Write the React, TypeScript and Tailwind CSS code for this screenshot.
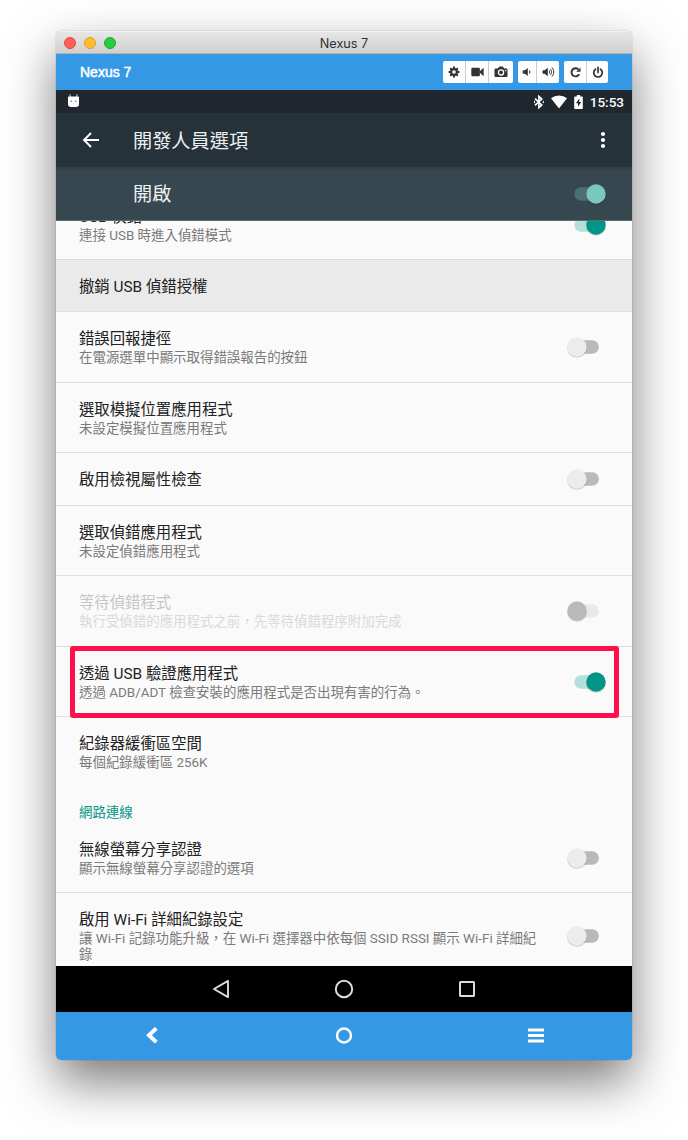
import React from "react";

type SwitchState = "on" | "off" | "disabled" | "master";

const switchColors: Record<SwitchState, { track: string; thumb: string; on: boolean }> = {
  on: { track: "#b5dfdb", thumb: "#009587", on: true },
  off: { track: "#b9b9b9", thumb: "#ececec", on: false },
  disabled: { track: "#e9e9ea", thumb: "#b9b9b9", on: false },
  master: { track: "#4b6f74", thumb: "#79c8c0", on: true },
};

function Switch({ state }: { state: SwitchState }) {
  const c = switchColors[state];
  const cx = c.on ? 30 : 11;
  return (
    <svg width="42" height="26" viewBox="0 0 42 26" className="shrink-0">
      <rect x="8.3" y="6.3" width="24.6" height="13.4" rx="6.7" fill={c.track} />
      <circle cx={cx} cy="13.9" r="9.9" fill="#000" opacity="0.16" />
      <circle cx={cx} cy="13" r="9.7" fill={c.thumb} />
    </svg>
  );
}

interface RowProps {
  title: string;
  summary?: string;
  state?: SwitchState;
  className: string;
  disabled?: boolean;
}

function Row({ title, summary, state, className, disabled }: RowProps) {
  return (
    <div className={`flex shrink-0 items-center justify-between pl-[23px] pr-6 ${className}`}>
      <div className={summary ? "w-[466px]" : "w-[466px] pt-[2px]"}>
        <div className={`text-[15.36px] leading-[22px] ${disabled ? "text-[#c6c6c6]" : "text-[#222222]"}`}>{title}</div>
        {summary && (
          <div className={`text-[13.44px] leading-4 ${disabled ? "text-[#d9d9d9]" : "text-[#7a7a7a]"}`}>{summary}</div>
        )}
      </div>
      {state && <Switch state={state} />}
    </div>
  );
}

function ToolButton({ className, children }: { className: string; children: React.ReactNode }) {
  return <div className={`box-content flex h-[22px] items-center justify-center bg-[#fefefe] text-[#333333] ${className}`}>{children}</div>;
}

const group = "flex overflow-hidden rounded-[2px] border-[#d4dde4] divide-x divide-[#cccccc]";

function Toolbar() {
  return (
    <div className="flex gap-[5px]">
      <div className={group}>
        <ToolButton className="w-[22px]">
          <svg width="12" height="12" viewBox="0 0 12 12" fill="none" stroke="currentColor">
            <circle cx="6" cy="6" r="2.9" strokeWidth="2.2" />
            <path d="M6 .6v1.8M6 9.6v1.8M.6 6h1.8M9.6 6h1.8M2.2 2.2l1.2 1.2M8.6 8.6l1.2 1.2M2.2 9.8l1.2-1.2M8.6 3.4l1.2-1.2" strokeWidth="2" />
          </svg>
        </ToolButton>
        <ToolButton className="w-[22px]">
          <svg width="13" height="10" viewBox="0 0 13 10" fill="currentColor">
            <rect x="0.3" y="0.7" width="8.6" height="8.6" rx="1.2" />
            <path d="M8.8 4.2 12.6 .7v8.6L8.8 5.800z" />
          </svg>
        </ToolButton>
        <ToolButton className="w-[24px]">
          <svg width="14" height="12" viewBox="0 0 14 12">
            <path d="M1.6 2.6h2.1L4.9.9q.3-.4.7-.4h2.8q.4 0 .7.4l1.2 1.7h2.1q1.1 0 1.1 1.1v6.2q0 1.1-1.1 1.1H1.6Q.5 11 .5 9.900V3.700q0-1.100 1.100-1.100z" fill="currentColor" />
            <circle cx="7" cy="6.400" r="2.600" fill="none" stroke="#fff" strokeWidth="1.300" />
            <rect x="11" y="4" width="1.300" height="1.200" fill="#fff" />
          </svg>
        </ToolButton>
      </div>
      <div className={group}>
        <ToolButton className="w-[18px]">
          <svg width="10" height="10" viewBox="0 0 10 10">
            <path d="M.8 3.200h2L5.800.9v8.200L2.800 6.800h-2z" fill="currentColor" />
            <path d="M7.300 3.500q1.300 1.500 0 3" fill="none" stroke="currentColor" strokeWidth="1.100" />
          </svg>
        </ToolButton>
        <ToolButton className="w-[22px]">
          <svg width="13" height="12" viewBox="0 0 13 12">
            <path d="M.6 4.200h2L5.800 1.800v8.400L2.600 7.800h-2z" fill="currentColor" />
            <path d="M7.200 4.400q1.100 1.600 0 3.200M8.600 2.900q2.300 3.100 0 6.200M10 1.500q3.600 4.500 0 9" fill="none" stroke="currentColor" strokeWidth="0.900" />
          </svg>
        </ToolButton>
      </div>
      <div className={group}>
        <ToolButton className="w-[22px]">
          <svg width="13" height="13" viewBox="0 0 13 13">
            <path d="M9.300 3.200A4.100 4.100 0 1 0 10.200 8.300" fill="none" stroke="currentColor" strokeWidth="1.900" />
            <path d="M11.500 1.400v4.300H7.200z" fill="currentColor" />
          </svg>
        </ToolButton>
        <ToolButton className="w-[21px]">
          <svg width="12" height="13" viewBox="0 0 12 13" fill="none" stroke="currentColor" strokeWidth="1.700" strokeLinecap="round">
            <path d="M3.500 3.200a4.300 4.300 0 1 0 5 0M6 1.400v5" />
          </svg>
        </ToolButton>
      </div>
    </div>
  );
}

export default function App() {
  return (
    <div className="h-[1140px] w-[688px] overflow-hidden bg-white pl-14 pt-[31px] font-['Roboto','Noto_Sans_CJK_TC',sans-serif]">
      <div className="flex h-[1029px] w-[576px] flex-col overflow-hidden rounded-[5px] shadow-[0_0_1px_rgba(0,0,0,0.6),0_22px_50px_rgba(0,0,0,0.52)]">
        <div className="flex h-[23px] shrink-0 items-center border-b border-t border-b-[#b4b4b4] border-t-[#f2f2f2] bg-linear-to-b from-[#e7e7e7] to-[#d0d0d0] px-2">
          <div className="flex w-20 gap-2">
            <span className="size-3 rounded-full border border-[#e14942] bg-[#ff5f57]" />
            <span className="size-3 rounded-full border border-[#dfa023] bg-[#ffbd2e]" />
            <span className="size-3 rounded-full border border-[#1dac2b] bg-[#28ca41]" />
          </div>
          <div className="flex-1 pt-[2px] text-center font-['Inter',sans-serif] text-[12.7px] leading-5 text-[#303030]">Nexus 7</div>
          <div className="w-20" />
        </div>

        <div className="flex h-9 shrink-0 items-center justify-between bg-[#3498e5] pl-6 pr-6">
          <div className="font-['Liberation_Sans',sans-serif] text-[14px] text-white [-webkit-text-stroke:0.5px_white]">Nexus 7</div>
          <Toolbar />
        </div>

        <div className="flex h-[23px] shrink-0 items-center justify-between bg-[#21272e] pl-[11px] pr-2 text-white">
          <svg width="13" height="14" viewBox="0 0 13 14" className="-mt-[2px]">
            <path d="M2.800 .3 3.500 3M10.200 .3 9.500 3" stroke="#d5d7d8" />
            <path d="M1.500 2.500h10q.5 0 .5.500v7q0 3-3 3H4q-3 0-3-3V3q0-.5.500-.5z" fill="#fff" />
            <circle cx="4.200" cy="7.300" r=".8" fill="#6b7075" />
            <circle cx="8.800" cy="7.300" r=".8" fill="#6b7075" />
          </svg>
          <div className="flex items-center">
            <svg width="10" height="14" viewBox="0 0 10 14" className="mr-[7px]" fill="none" stroke="#fff" strokeWidth="1.600">
              <path d="m1 3.600 6.800 6.300-2.900 2.700V1.400l2.900 2.700L1 10.400" />
              <path d="M9.300 5.800v2.400M.6 5.800v2.400" strokeWidth="1" />
            </svg>
            <svg width="16" height="14" viewBox="0 0 16 14" className="mr-[7px]">
              <path d="M0 3.200Q3.400.4 8 .4t8 2.800L8 13.400z" fill="#fff" />
            </svg>
            <svg width="9" height="14" viewBox="0 0 9 14" className="mr-[7px]">
              <path d="M2.800 0h3.400v1.400H8q.8 0 .8.800v11q0 .8-.8.800H1q-.8 0-.8-.8v-11q0-.8.8-.8h1.800z" fill="#fff" />
              <path d="M5.300 3.500 2 8.200h2v3.600l3.200-4.900H5.300z" fill="#21272e" />
            </svg>
            <span className="text-[13.5px] font-medium leading-5">15:53</span>
          </div>
        </div>

        <div className="flex h-[54px] shrink-0 items-center bg-[#263239] pl-[26px] pr-[26px] text-[#eef0f1]">
          <svg width="18" height="16" viewBox="0 0 18 16" fill="none" stroke="#fff" strokeWidth="1.900">
            <path d="M17 8H2.500M9 1 2 8l7 7" />
          </svg>
          <div className="ml-[33px] flex-1 pt-[3px] text-[19.2px] leading-7">開發人員選項</div>
          <svg width="6" height="18" viewBox="0 0 6 18" fill="#fff">
            <circle cx="3" cy="3" r="2.100" />
            <circle cx="3" cy="9" r="2.100" />
            <circle cx="3" cy="15" r="2.100" />
          </svg>
        </div>

        <div className="flex h-[54px] shrink-0 items-center justify-between border-b border-[#5f6c72] bg-[#37474f] bg-linear-to-b from-[#303e46] from-0% to-[#37474f] to-[4px] pl-[77px] pr-6 text-[#eef0f1]">
          <div className="pt-[3px] text-[19.2px] leading-7">開啟</div>
          <Switch state="master" />
        </div>

        <div className="relative flex h-[745px] shrink-0 flex-col overflow-hidden bg-[#fafafa]">
          <Row title="USB 偵錯" summary="連接 USB 時進入偵錯模式" state="on" className="-mt-[31px] h-[70px] border-b border-[#dadada] pt-[1px]" />
          <Row title="撤銷 USB 偵錯授權" className="h-[52px] border-b border-[#e2e2e2] bg-[#eaeaea]" />
          <Row title="錯誤回報捷徑" summary="在電源選單中顯示取得錯誤報告的按鈕" state="off" className="h-[71px] border-b border-[#dadada]" />
          <Row title="選取模擬位置應用程式" summary="未設定模擬位置應用程式" className="h-[70px] border-b border-[#e0e0e0]" />
          <Row title="啟用檢視屬性檢查" state="off" className="h-[53px] border-b border-[#dadada]" />
          <Row title="選取偵錯應用程式" summary="未設定偵錯應用程式" className="h-[70px] border-b border-[#e0e0e0]" />
          <Row title="等待偵錯程式" summary="執行受偵錯的應用程式之前，先等待偵錯程序附加完成" state="disabled" disabled className="h-[71px] border-b border-[#dadada]" />
          <Row title="透過 USB 驗證應用程式" summary="透過 ADB/ADT 檢查安裝的應用程式是否出現有害的行為。" state="on" className="h-[70px] border-b border-[#e0e0e0]" />
          <Row title="紀錄器緩衝區空間" summary="每個紀錄緩衝區 256K" className="h-[70px]" />
          <div className="flex h-9 shrink-0 items-end pb-px pl-[23px] text-[13.44px] leading-[18px] text-[#009587]">網路連線</div>
          <Row title="無線螢幕分享認證" summary="顯示無線螢幕分享認證的選項" state="off" className="h-[70px] border-b border-[#e0e0e0]" />
          <Row title="啟用 Wi-Fi 詳細紀錄設定" summary="讓 Wi-Fi 記錄功能升級，在 Wi-Fi 選擇器中依每個 SSID RSSI 顯示 Wi-Fi 詳細紀錄" state="off" className="h-[86px]" />
          <div className="absolute left-[14px] top-[425px] h-[72px] w-[549px] rounded-[3px] border-[5px] border-[#ff0f4b]" />
        </div>

        <div className="flex h-[46px] shrink-0 items-center justify-center bg-black">
          <div className="grid w-[369px] grid-cols-3 place-items-center">
            <svg width="18" height="20" viewBox="0 0 18 20" fill="none" stroke="#dcdcdc" strokeWidth="1.900" strokeLinejoin="round">
              <path d="M16 1.900v16.200L2 10z" />
            </svg>
            <svg width="20" height="20" viewBox="0 0 20 20" fill="none" stroke="#dcdcdc" strokeWidth="2">
              <circle cx="10" cy="10" r="8.200" />
            </svg>
            <svg width="18" height="18" viewBox="0 0 18 18" fill="none" stroke="#dcdcdc" strokeWidth="2">
              <rect x="2" y="2" width="14" height="14" rx=".5" />
            </svg>
          </div>
        </div>

        <div className="grid h-12 shrink-0 grid-cols-3 place-items-center bg-[#3498e5]">
          <svg width="12" height="18" viewBox="0 0 12 18" fill="none" stroke="#fff" strokeWidth="4">
            <path d="M10.300 1.400 3 8.200l7.300 6.900" />
          </svg>
          <svg width="18" height="18" viewBox="0 0 18 18" fill="none" stroke="#fff" strokeWidth="2.400">
            <circle cx="9" cy="8.500" r="7" />
          </svg>
          <svg width="16" height="16" viewBox="0 0 16 16" fill="#fff">
            <rect y=".5" width="16" height="3" />
            <rect y="6" width="16" height="3" />
            <rect y="11.500" width="16" height="3" />
          </svg>
        </div>
      </div>
    </div>
  );
}
